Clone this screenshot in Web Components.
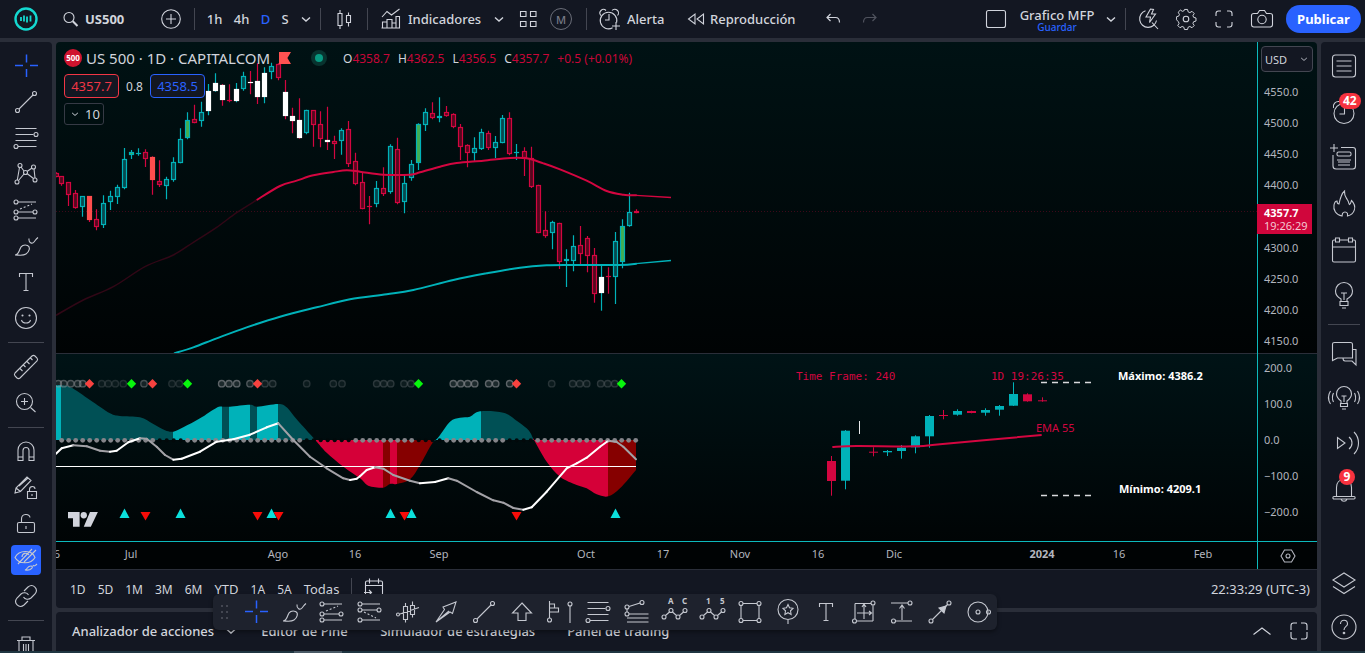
<!DOCTYPE html>
<html lang="es">
<head>
<meta charset="utf-8">
<title>US500 - Grafico MFP</title>
<style>
html, body { margin: 0; height: 100%; background: #2a2e39; }
body { font-family: "Noto Sans", "Open Sans", sans-serif; font-size: 13px; color: #d1d4dc; overflow: hidden; }
</style>
</head>
<body>
<trading-app></trading-app>
<script>
const RESET = `
*{box-sizing:border-box}
:host([hidden]){display:none}
button,select{font:inherit;color:inherit;background:none;border:0;padding:0;margin:0;cursor:pointer}
a{color:inherit;text-decoration:none}
`;
function define(name, css, html, setup) {
  const t = document.createElement('template');
  t.innerHTML = `<style>${RESET}${css}</style>${html}`;
  customElements.define(name, class extends HTMLElement {
    constructor() {
      super();
      this.attachShadow({ mode: 'open' }).append(t.content.cloneNode(true));
    }
    connectedCallback() { if (setup && !this.ready) { this.ready = true; setup(this.shadowRoot, this); } }
  });
}

/* ---------- icons, all on a 28 x 28 grid ---------- */
const c = (x, y, r = 2) => `<circle cx="${x}" cy="${y}" r="${r}"/>`;
const p = (d, extra = '') => `<path d="${d}" ${extra}/>`;
const BULB = p('M11 19v-2c-2-1.500-4.500-3.500-4.500-7a7.500 7.500 0 0 1 15 0c0 3.500-2.500 5.500-4.500 7v2M10.500 19.500h7v3h-7zM12 25h4M14 18v-6M11.500 12h5');
const ICONS = {
  logo: `<circle cx="14" cy="14" r="10.500" stroke="#14d8d0" stroke-width="2.400"/><path d="M9 12v4M12 10.500v6M15 11.500v6M18.500 10.500v6" stroke="#14d8d0" stroke-width="1.800"/>`,
  search: c(13, 12.5, 5) + p('M16.800 16.300l4.700 4.700', 'stroke-width="2"'),
  plus: c(14, 14, 9.3) + p('M14 9v10M9 14h10'),
  chevron: p('M10 12.500l4 3.500 4-3.500', 'stroke-width="1.400"'),
  chevronup: p('M5.500 17.500l8.500-6.500 8.500 6.500'),
  candles: p('M8 8.500h4v12H8zM10 5v3.500M10 20.500V24M16.500 10.500h4v7h-4zM18.500 7.500v3M18.500 17.500v4'),
  indicators: p('M5.500 23v-6h4.500v6M10 23V14.500h5V23M15 18h4v5M19 23V11.500h3.500V23zM4.500 23h18.500M5 12l5-5.500 4.500 3.500L22.500 4'),
  grid: p('M6.500 6.500h5.500v5h-5.500zM16.500 6.500h5.500v5h-5.500zM6.500 16.500h5.500v5h-5.500zM16.500 16.500h5.500v5h-5.500z'),
  alert: p('M20.600 17.500a8.300 8.300 0 1 0-4 5.300M13 9v6h-4M5 10.500a3.500 3.500 0 0 1 5-5M16 5.500a3.500 3.500 0 0 1 5.500 5M20 17v8M16 21h8'),
  rewind: p('M13 9v10l-6.500-5zM21.500 9v10L15 14z'),
  undo: p('M11.500 9L8 12.500l3.500 3.500M8.500 12.500h8c3 0 4 2 4 5', 'stroke-width="1.200"'),
  redo: p('M16.500 9l3.500 3.500-3.500 3.500M19.500 12.500h-8c-3 0-4 2-4 5', 'stroke-width="1.200"'),
  layout: `<rect x="4.500" y="5.500" width="19" height="17" rx="2"/>`,
  quick: p('M11.500 5.800a8.500 8.500 0 1 0 11 9.700M18 17.500l6 6.500M16.500 4l-4.500 8h4.500l-1 5.500 6-8.500h-4l2-4.500z'),
  gear: p('M12.300 4.500h3.400l.7 2.700 1.900.8 2.400-1.400 2.400 2.400-1.400 2.400.8 1.900 2.600.7v3.400l-2.600.7-.8 1.900 1.400 2.400-2.400 2.400-2.400-1.400-1.900.8-.7 2.600h-3.400l-.7-2.600-1.900-.8-2.400 1.400-2.400-2.400 1.400-2.400-.8-1.900L3.500 16v-3.400l2.400-.7.8-1.900-1.400-2.400 2.400-2.400 2.400 1.400 1.900-.8z', 'transform="translate(1.400 .4) scale(.9)"') + c(14, 14, 2.8),
  full: p('M6 11V8.500c0-1.500 1-2.500 2.500-2.500H11M17 6h2.500C21 6 22 7 22 8.500V11M22 17v2.500c0 1.500-1 2.500-2.500 2.500H17M11 22H8.500C7 22 6 21 6 19.500V17'),
  maximize: p('M6 13V8.500c0-1.500 1-2.500 2.500-2.500H12M16 6h3.500C21 6 22 7 22 8.500V13M22 15v4.500c0 1.500-1 2.500-2.500 2.500H16M12 22H8.500C7 22 6 21 6 19.500V15'),
  camera: p('M6 8.500h3.500l2-3h5l2 3H22c1.500 0 2.500 1 2.500 2v9c0 1.500-1 2.500-2.500 2.500H6c-1.500 0-2.500-1-2.500-2.500v-9c0-1 1-2 2.500-2z') + c(14, 14.5, 4.2),
  cross: p('M14.500 2.500v8M14.500 17v8M3 13.500h8M18 13.500h8', 'stroke="#2962ff" stroke-width="1.500"'),
  trend: c(5.5, 22.5) + c(22.5, 5.500) + p('M7 21L21 7'),
  fib: p('M3.500 4.500h21M3.500 10.500h18M3.500 16.500h21M6 22.500h18.500') + c(24, 10.5) + c(4, 22.5),
  pattern: c(5, 22) + c(8, 5.5) + c(13.5, 12.5) + c(21.5, 7) + c(23, 20) + p('M5.300 20L7.500 7.500M9 7l3 4M6.500 20.500l5.500-6.500M15 11.500l5-3.500M22 9l1 9M15 13.500l6.500 5'),
  project: c(4, 6) + c(4, 22) + c(23, 16) + c(4, 16) + p('M6 6h18M6 16h15M6 22h18') + p('M8 13l12-5', 'stroke-dasharray="2 2"'),
  project2: c(4, 6) + c(4, 12) + c(23, 12) + c(4, 22) + p('M6 6h18M6 12h15M6 22h18') + p('M8 14l12 6', 'stroke-dasharray="2 2"'),
  brush: p('M3 23c3 0 4-3 5-6s4-5 7.500-3.500S17 20 14 22s-7 1-11 1zM17 6.500c-.5 4 3 6 5 3.500S24 7 26 5.500'),
  text: p('M7.500 9V5.500h13V9M14 5.500v17M11.500 22.500h5'),
  smile: c(14, 14, 10.5) + p('M9.500 16c1 4 8 4 9 0') + c(10.5, 11.5, .5) + c(17.5, 11.500, .5),
  ruler: p('M3 20L20 3c1-.8 2-.8 3 0l2 2c.8 1 .8 2 0 3L8 25c-1 .8-2 .8-3 0l-2-2c-.8-1-.8-2 0-3zM8 15.500l2.500 2.500M11.500 12l2 2M15 8.500l2.500 2.500M18.500 5l2 2'),
  zoomin: c(12.5, 12.5, 8) + p('M18.500 18.500l5 4.500M12.500 9v7M9 12.500h7'),
  magnet: p('M6 22.500V12a8 8 0 0 1 16 0v10.500h-5V12.500a3 3 0 0 0-6 0v10zM6 19h5M17 19h5'),
  penlock: p('M3 19l1-5L15 3l4 3.500L8.500 17.500zM4 14l4.500 3.500M7 12l9-8M15.500 17.500h9v7h-9zM17.500 17.500v-2c0-4 5.500-4 5.500-.5M20 20v2'),
  lock: p('M7 12.500h14c1 0 1.500.5 1.500 1.500v7c0 1-.5 1.500-1.500 1.500H7c-1 0-1.500-.5-1.500-1.500v-7c0-1 .5-1.500 1.500-1.500zM9.500 12.500V9c0-6 8-5.500 8.500-1.500M14 16v3'),
  hide: p('M3 11.500c4-8 17-8 20 0-4 7-16 7-20 0zM20 3L6 18M24 4L12 16M10 11c0-4 5-5 7-2') + p('M13 24c3-1 2-4 6-4 3 0 1 5-6 4zM21 19c1 2 3 0 4-1'),
  link: p('M12 9l4-4c5-4 11 2 7 7l-4 4c-2.500 2-6 1.500-7.500-1M16 19l-4 4c-5 4-11-2-7-7l4-4c2.500-2 6-1.500 7.500 1'),
  trash: p('M5 9.500h18M7 9.500V23c0 1 .5 1.500 1.500 1.500h11c1 0 1.500-.5 1.500-1.500V9.500M10 9V6h8v3M11.500 13v8M14 13v8M16.500 13v8'),
  list: `<rect x="2.500" y="3" width="23" height="22" rx="3"/>` + p('M6.500 9h15M6.500 14h15M6.500 19h15'),
  clock: c(14, 15.5, 10) + p('M14.500 10v6h-5M3.500 10c-1-4 2-7 6-6.500M18.500 3.500c4-.5 7 3 6 6.500'),
  note: p('M11 3.500h12c1.500 0 2.500 1 2.500 2.500v16c0 2-1 3-2.500 3H6c-2 0-3-1-3-3V11M4 0v8M0 4h8M8 18h12M8 21h12') + `<rect x="7" y="8" width="14" height="4" rx="1.500"/>` + p('M7 16h14'),
  fire: p('M12 26C6 25 3 20 4 15c.5-2.500 2-4 3-4 0 2 .5 3 2 3C10 9 11 4 14.500 1c-.5 5 2 7 3 9 1.500 2 1 4 2 4.500 1.500-1 1.500-3 2-4 6 6 3 14-4 15.500v-2.500c-1-2-4-2-5 0z'),
  calendar: p('M9.500 4h9M23 4h1c1 0 1.500.5 1.500 1.500v19c0 1-.5 1.500-1.500 1.500H4c-1 0-1.500-.5-1.500-1.500v-19C2.500 4.500 3 4 4 4h1M2.500 11h23M5.500 2h4v4h-4zM18.500 2h4v4h-4z'),
  bulb: p('M11 19v-2c-3-1.500-5.500-4-5.500-8a8.500 8.500 0 0 1 17 0c0 4-2.500 6.500-5.500 8v2M10 19.500h8v4h-8zM12 26h4M14 18v-7M11 11h6'),
  chat: p('M2.500 21.500V5c0-1 1-1.500 2-1.500h16c1.500 0 2 .5 2 2V19H7.500zM22.500 10.500H26V26l-4-4h-7c-1 0-2-1-2-3'),
  stream: BULB + p('M3.500 9c-1.500 3-1.500 6 0 9M.5 7c-2.500 4-2.500 9 0 13M24.500 9c1.500 3 1.500 6 0 9M27.500 7c2.500 4 2.500 9 0 13'),
  cast: p('M7.500 8.500v11l7.500-5.500zM19 8c4 3 4 9 0 12M24 3c6 6 6 16 0 22'),
  bell: p('M6.500 22v-8.500c0-5 3-8 7.500-8s7.500 3 7.500 8V22M11 25c1 3 5 3 6 0M4 22.500h20c1.500 0 1.500 2.500 0 2.500H4c-1.500 0-1.500-2.500 0-2.500z'),
  layers: p('M3 11L14 4l11 7-11 7zM3 17.500L14 24.500l11-7'),
  help: c(14, 14, 12) + p('M10.500 11c0-5 7-5 7 0 0 2.500-3.500 2.500-3.500 6') + c(14, 20, .8),
  axisgear: p('M10.500 8h7l3.500 6-3.500 6h-7L7 14z') + c(14, 14, 2),
  calrange: p('M11 8h7M5.500 21.500V9.500C5.500 8.500 6 8 7 8h14c1 0 1.500.5 1.500 1.500V21M5.500 12.500h17M9.500 5.500v5M18.500 5.500v5M9 17l2.500 2.500L9 22M11.500 19.500H4'),
  drag: `<g fill="#434651" stroke="none"><rect x="10" y="7" width="2" height="2"/><rect x="15" y="7" width="2" height="2"/><rect x="10" y="13" width="2" height="2"/><rect x="15" y="13" width="2" height="2"/><rect x="10" y="19" width="2" height="2"/><rect x="15" y="19" width="2" height="2"/></g>`,
  ghost: p('M9.500 8.500h4v13h-4zM11.500 5v3.500M11.500 21.500v3M16.500 7.500h4v9h-4zM18.500 3.500v4M18.500 16.500v3M6 16l19-6.500') + c(4, 16.5, 1.5),
  arrow: p('M4 24L12.500 11.500 11 9 24 4l-3.500 11.500-2.500-1.500zM4 24l13-11'),
  arrowup: p('M14 5l9.500 10H18v7.500h-8V15H4.500z'),
  volume: c(3.500, 22) + p('M3.500 3v17M3.500 6h5v4h-5M3.500 10h9v4h-9M24 8v17') + c(24, 6),
  fan: c(5, 9) + c(5, 16) + c(20, 4.5) + p('M7 8.500L18 5M5 11v3M7 16h19.500M5 20h21.500M5 24h21.500'),
  zig: c(4, 19) + c(11, 12.500) + c(18, 19) + c(25, 12.500) + p('M5.500 17.500l4-3.500M12.500 14l4 3.500M19.500 17.500l4-3.500'),
  rect: c(5, 5.5) + c(23, 5.500) + c(5, 22.5) + c(23, 22.5) + p('M7 5.500h14M7 22.500h14M5 7.500v13M23 7.500v13'),
  pin: c(14, 11.500, 10) + p('M14 22v4M14 6.500l1.500 3.300 3.500.5-2.500 2.500.6 3.600-3.100-1.700-3.100 1.700.6-3.600L9 10.300l3.500-.5z'),
  range: p('M5 5.500h16M23 7.500v15.500M5 5.500V21M7 23h16M14 7v14M7 15h14M12 9l2-3 2 3M19 13l2.500 2-2.500 2') + c(23, 5) + c(4.5, 23),
  pricerange: p('M3 5h17M7 23h17M14 22V8M11.500 10.500L14 7l2.500 3.500') + c(22, 5) + c(5.5, 23),
  arrowline: c(5, 23) + c(23, 5) + p('M6.500 21.500L21.500 6.500') + p('M20 8l-7 2 5 5z', 'fill="currentColor"'),
  circle: c(14, 14, 10) + c(14, 14, 2) + c(24.5, 14)
};
customElements.define('ui-icon', class extends HTMLElement {
  constructor() { super(); this.attachShadow({ mode: 'open' }); }
  connectedCallback() {
    this.shadowRoot.innerHTML = `<style>:host{display:inline-flex;width:28px;height:28px;flex:none}svg{width:100%;height:100%;overflow:visible}</style>
    <svg viewBox="0 0 28 28" fill="none" stroke="currentColor" stroke-width="1.100" aria-hidden="true">${ICONS[this.getAttribute('name')] || ''}</svg>`;
  }
});

/* a square toolbar button with an icon and an optional badge */
customElements.define('tool-button', class extends HTMLElement {
  constructor() { super(); this.attachShadow({ mode: 'open' }); }
  connectedCallback() {
    const icon = this.getAttribute('icon'), label = this.getAttribute('label') || icon;
    this.shadowRoot.innerHTML = `<style>${RESET}
      :host{display:flex;flex:none;width:var(--w,38px);height:var(--h,36px)}
      button{position:relative;width:100%;height:100%;display:flex;align-items:center;justify-content:center}
      :host([active]) button{height:30px;width:30px;margin:auto;background:#2962ff;border-radius:4px}
      :host([dim]){color:#50535e}
      b{position:absolute;top:4px;left:50%;font-size:12px;line-height:16px;color:#fff;background:#f7323f;border-radius:8px;padding:0 4px;min-width:16px;margin-left:-5px}
      </style><button aria-label="${label}"><ui-icon name="${icon}"></ui-icon>${this.hasAttribute('badge') ? `<b>${this.getAttribute('badge')}</b>` : ''}</button>`;
  }
});
const tb = (icon, w, extra = '') => `<tool-button icon="${icon}" style="--w:${w}px" ${extra}></tool-button>`;

define('top-bar', `
:host{display:flex;align-items:center;height:38px;background:#131722;padding-right:4px;font-weight:500;color:#d1d4dc}
i{flex:none;width:1px;height:22px;background:#434651}
.t{height:36px;flex:none;white-space:nowrap;text-align:left}
.sym{font-weight:700;display:flex;align-items:center;width:98px;gap:1px}
.m{width:22px;height:22px;border:1px solid #6a6d78;border-radius:50%;color:#787b86;font-size:11px;margin:0 14px 0 6px}
.iv{width:27px;text-align:center}
.on{color:#2962ff}
.name{margin-left:auto;display:flex;align-items:center}
.save{display:flex;flex-direction:column;align-items:center;justify-content:center;width:80px;height:36px;line-height:18px}
.save small{font-size:10px;line-height:14px;height:12px;color:#2962ff;margin-top:-4px}
.pub{background:#2962ff;color:#fff;font-weight:700;height:28px;width:75px;border-radius:14px;margin-left:5px}
.g{flex:none;width:6px}
`, `
${tb('logo', 52)}<span class="g" style="width:4px"></span>
<button class="t sym"><ui-icon name="search"></ui-icon>US500</button>
${tb('plus', 34)}<span class="g"></span><i></i><span class="g"></span>
<button class="t iv">1h</button><button class="t iv">4h</button><button class="t iv on" style="width:21px">D</button><button class="t iv" style="width:18px">S</button>
${tb('chevron', 24)}<span class="g" style="width:2px"></span><i></i>
${tb('candles', 46)}<i></i><span class="g"></span>
${tb('indicators', 34)}<button class="t" style="width:78px">Indicadores</button>${tb('chevron', 26)}
${tb('grid', 32)}<button class="m" aria-label="Modelo">M</button><i></i><span class="g"></span>
${tb('alert', 34)}<button class="t" style="width:54px">Alerta</button>
${tb('rewind', 29)}<button class="t" style="width:104px">Reproducción</button>
${tb('undo', 37)}${tb('redo', 37, 'dim')}
<div class="name">${tb('layout', 42)}<button class="save"><span>Grafico MFP</span><small>Guardar</small></button>${tb('chevron', 28)}</div><i></i>
<span class="g" style="width:3px"></span>
${tb('quick', 38)}${tb('gear', 38)}${tb('full', 38)}${tb('camera', 38)}
<button class="pub">Publicar</button>
`);

define('side-tools', `
:host{display:flex;flex-direction:column;align-items:center;background:#131722;padding-top:6px;overflow:hidden;border-radius:0 4px 0 0;min-height:0;--w:52px;color:#c5c8d0}
hr{flex:none;width:36px;height:1px;border:0;margin:6px 0;background:#434651}
`, ['cross', 'trend', 'fib', 'pattern', 'project', 'brush', 'text', 'smile', '-', 'ruler', 'zoomin', '-', 'magnet', 'penlock', 'lock', 'hide', 'link', '-', 'trash']
  .map(n => n === '-' ? '<hr>' : `<tool-button icon="${n}" ${n === 'hide' ? 'active' : ''}></tool-button>`).join(''));

define('right-rail', `
:host{display:flex;flex-direction:column;align-items:center;background:#131722;padding:1px 0 2px 2px;overflow:hidden;border-radius:4px 0 0 0;min-height:0;--w:42px;--h:46px;color:#c5c8d0}
hr{flex:none;width:32px;height:1px;border:0;margin:5px 0;background:#434651}
.low{--h:45px}
.foot{margin-top:auto;--h:44px}
`, `
<tool-button icon="list"></tool-button><tool-button icon="clock" badge="42"></tool-button><tool-button icon="note"></tool-button>
<tool-button icon="fire"></tool-button><tool-button icon="calendar"></tool-button><tool-button icon="bulb"></tool-button><hr>
<div class="low"><tool-button icon="chat"></tool-button><tool-button icon="stream"></tool-button><tool-button icon="cast"></tool-button><tool-button icon="bell" badge="9"></tool-button></div>
<div class="foot"><tool-button icon="layers"></tool-button><tool-button icon="help"></tool-button></div>`);

/* ---------- legend over the price pane ---------- */
define('chart-legend', `
:host{display:flex;flex-direction:column;align-items:flex-start}
.row{display:flex;align-items:center}
.a{height:22px}
.logo{width:18px;height:18px;border-radius:50%;background:#cf142f;color:#fff;font-weight:700;font-size:8px;line-height:18px;text-align:center;margin-right:4px}
h1{margin:0;font-size:15px;font-weight:400;width:193px;white-space:nowrap;color:#d1d4dc}
.flag{width:12px;height:12px;background:#ff5252;clip-path:polygon(0 0,100% 0,70% 50%,100% 100%,0 100%)}
.dot{width:8px;height:8px;border-radius:50%;background:#089981;box-shadow:0 0 0 4px #08332f;margin:0 20px 0 24px}
.o{gap:8px;font-size:12px;color:#c80638}
.o b{font-weight:400;color:#d1d4dc}
.b{margin-top:5px;height:24px}
.px{width:55px;height:24px;border:1px solid #f23645;border-radius:4px;color:#f23645;background:#131722}
.ask{border-color:#2962ff;color:#2962ff}
.sp{width:31px;text-align:center;font-size:12px}
.n{margin-top:5px;height:22px;width:40px;border:1px solid #363a45;border-radius:3px;display:flex;align-items:center}
.n ui-icon{width:20px;height:28px}
`, `
<div class="row a"><span class="logo">500</span><h1>US 500 · 1D · CAPITALCOM</h1><span class="flag"></span><span class="dot"></span>
<div class="row o"><span><b>O</b>4358.7</span><span><b>H</b>4362.5</span><span><b>L</b>4356.5</span><span><b>C</b>4357.7</span><span>+0.5 (+0.01%)</span></div></div>
<div class="row b"><button class="px">4357.7</button><span class="sp">0.8</span><button class="px ask">4358.5</button></div>
<button class="n"><ui-icon name="chevron"></ui-icon>10</button>`);

/* ---------- chart data: [x, high, body top, body bottom, low, kind], 3 units per pixel ---------- */
const BARS_A = [[18,397,400,412,412,'r'],[35,409,409,431,437,'r'],[56,427,427,464,498,'r'],[77,450,460,503,506,'r'],[98,468,469,500,530,'t'],[119,469,469,540,546,'R'],[140,508,536,562,571,'r'],[161,466,488,556,564,'t'],[182,452,469,486,510,'t'],[203,434,442,470,492,'t'],[224,324,358,445,448,'t'],[245,330,337,346,357,'g'],[266,325,339,342,347,'t'],[287,328,337,357,381,'r'],[308,349,352,421,464,'R'],[329,361,422,434,441,'r'],[350,410,417,437,478,'t'],[371,352,367,419,425,'t'],[392,265,298,368,370,'t'],[413,217,241,295,298,'g'],[434,194,237,248,250,'r'],[455,185,217,244,260,'t'],[476,132,154,214,226,'wt'],[497,100,130,152,155,'wt'],[518,132,135,181,197,'wr'],[539,133,181,184,187,'r'],[560,129,146,182,187,'wt'],[581,95,108,146,152,'t'],[602,93,125,128,163,'wr'],[623,70,122,172,192,'wr'],[644,82,100,172,190,'wt'],[665,68,79,95,118,'t'],[686,70,72,115,121,'r'],[707,120,155,228,238,'wr'],[728,203,227,244,280,'wr'],[749,175,241,293,296,'wr'],[770,209,211,280,283,'t'],[791,211,211,254,320,'r'],[812,214,253,298,322,'r'],[833,200,300,306,330,'wr'],[854,287,303,313,357,'r'],[875,265,271,304,344,'t'],[896,243,267,371,381,'r'],[917,338,363,433,436,'r'],[938,395,427,506,508,'r'],[959,468,499,502,553,'r'],[980,423,444,492,502,'t']];
const BARS_B = [[71,262,325,342,348,'r'],[92,193,198,337,341,'t'],[113,173,208,368,373,'r'],[134,283,310,365,400,'t'],[155,240,252,293,302,'t'],[176,130,132,250,270,'g'],[197,85,97,134,153,'t'],[218,67,99,114,118,'r'],[239,52,108,113,127,'t'],[260,78,97,107,110,'r'],[281,100,102,142,145,'r'],[302,132,141,201,240,'r'],[323,193,195,220,262,'r'],[344,172,204,218,242,'t'],[365,146,157,207,210,'t'],[386,152,160,203,210,'r'],[407,168,186,203,234,'t'],[428,105,115,188,190,'t'],[449,97,114,223,226,'r'],[470,192,216,219,240,'t'],[494,202,213,234,288,'r'],[515,200,235,322,324,'r'],[536,314,316,458,460,'r'],[557,394,450,467,473,'r'],[578,422,427,458,508,'t'],[599,428,430,545,567,'r'],[620,508,538,543,621,'t'],[641,466,498,542,574,'t'],[662,438,495,521,552,'r'],[683,468,475,527,577,'r'],[704,504,526,641,668,'r'],[725,555,590,640,692,'wt'],[746,562,587,590,641,'r'],[767,456,484,590,672,'t'],[788,418,438,545,565,'g'],[809,338,397,437,440,'t'],[829,388,394,400,400,'r']];
const TEAL = '#00b2b9', RED = '#d30640';
const shift = (pts, ox, oy) => pts.map(([x, y]) => [ox + x / 3, oy + y / 3]);
const line = pts => 'M' + pts.map(q => q.map(v => +v.toFixed(1)).join(' ')).join('L');
function smooth(pts) {
  let d = `M${pts[0].join(' ')}`;
  for (let i = 0; i < pts.length - 1; i++) {
    const a = pts[i - 1] || pts[i], b = pts[i], e = pts[i + 1], f = pts[i + 2] || e;
    d += `C${[b[0] + (e[0] - a[0]) / 6, b[1] + (e[1] - a[1]) / 6, e[0] - (f[0] - b[0]) / 6, e[1] - (f[1] - b[1]) / 6, e[0], e[1]].map(v => v.toFixed(2)).join(' ')}`;
  }
  return d;
}
function candle([x, hi, t, b, lo, k], ox, oy) {
  const cx = Math.floor(ox + x / 3) + .5, Y = v => oy + v / 3;
  const wick = (k === 'r' || k === 'R' || k === 'wr') ? RED : TEAL;
  const fill = { r: '#55081e', t: '#06494f', g: '#43ad50', R: '#ff4e4e', wt: '#fff', wr: '#fff' }[k];
  const edge = k[0] === 'w' ? '#fff' : k === 'R' ? '#ff4e4e' : wick;
  const top = Math.round(Y(t)) + .5, h = Math.max(0.01, Math.round(Y(b)) - Math.round(Y(t)) - 1);
  return `<path d="M${cx} ${Y(hi).toFixed(1)}V${Y(lo).toFixed(1)}" stroke="${wick}" stroke-width="1.200"/>` +
    `<rect x="${cx - 2}" y="${top}" width="4" height="${h}" fill="${fill}" stroke="${edge}" stroke-width="1.200"/>`;
}
const FADED = [[18,826],[100,780],[190,740],[285,680],[370,645],[430,607],[500,562],[560,518],[620,480]];
const EMA = [...shift([[620,480],[690,438],[740,422],[790,406],[850,396],[890,391],[930,395]], 50, 40), ...shift([[70,284],[150,284],[180,277],[240,260],[290,249],[370,242],[450,234],[500,235],[550,250],[600,268],[680,302],[740,333],[790,344],[830,346]], 360, 80)];
const SLOW = [...shift([[372,940],[430,922],[500,895],[590,862],[690,830],[800,802],[900,778]], 50, 40), ...shift([[80,643],[160,630],[280,600],[380,580],[480,563],[560,556],[640,555],[780,555],[830,551]], 360, 80)];

define('price-pane', `
:host{display:block;position:relative;min-height:0;overflow:hidden;background:linear-gradient(#001214,#000304)}
svg{display:block;width:100%;height:100%}
chart-legend{position:absolute;left:8px;top:5px}
`, `<svg viewBox="56 42 1201 311" preserveAspectRatio="xMinYMin slice" fill="none" role="img" aria-label="US 500"></svg><chart-legend></chart-legend>`,
root => {
  root.querySelector('svg').innerHTML =
    `<path d="M56 211.500H1257" stroke="#6e0a26" stroke-dasharray="1 2" opacity=".55"/>` +
    BARS_A.map(b => candle(b, 50, 40)).join('') + BARS_B.map(b => candle(b, 360, 80)).join('') +
    `<path d="${smooth(shift(FADED, 50, 40))}" stroke="#300716" stroke-width="1.500"/>
     <path d="${smooth(EMA)}" stroke="${RED}" stroke-width="2"/><path d="M636 195.400L671 197.500" stroke="${RED}" stroke-width="1.300"/>
     <path d="${smooth(SLOW)}" stroke="${TEAL}" stroke-width="2"/><path d="M636 263.700L671 260.500" stroke="${TEAL}" stroke-width="1.300"/>`;
});

const WAVE = [...shift([[18,106],[60,111],[120,150],[180,190],[210,198],[270,202],[310,222],[345,241],[370,245],[400,232],[450,205],[500,173],[520,170],[540,170],[600,164],[622,170],[685,162],[710,172],[740,208],[795,269],[830,308],[880,350],[930,385]], 50, 350),
  ...shift([[20,404],[40,411],[70,413],[90,402],[110,402],[150,388],[180,345],[215,283],[235,262],[270,215],[300,203],[330,200],[360,184],[430,188],[470,212],[500,235],[512,250],[522,270],[560,335],[600,380],[650,405],[680,415],[710,433],[745,439],[780,415],[828,360]], 360, 350)];
const BANDS = [[56,61,0],[61,173,1],[173,222,0],[222,229,1],[229,250,0],[250,257,1],[257,278,0],[278,315,1],[315,383,2],[383,390,3],[390,397,2],[397,433,3],[433,481,0],[481,533,1],[533,608,2],[608,636,3]];
const BAND_FILL = [TEAL, '#005055', '#d50038', '#860000'];
const MOM = [...shift([[18,311],[35,295],[70,286],[110,289],[150,302],[180,305],[200,302],[235,277],[270,265],[290,266],[320,290],[345,315],[370,329],[395,326],[450,305],[500,275],[550,268],[600,254],[650,232],[685,220],[730,270],[780,320],[830,355],[880,385],[900,390],[920,386]], 50, 350),
  ...shift([[0,379],[20,360],[45,352],[70,356],[100,375],[150,392],[180,400],[225,396],[265,385],[290,392],[350,426],[400,451],[430,458],[460,474],[490,479],[515,472],[560,425],[620,355],[650,340],[680,323],[720,290],[745,272],[770,276],[790,290],[828,328]], 360, 350)];
const MINI = [[155,318,333,393,437,1],[197,240,242,392,418,0],[281,292,305,307,319,1],[323,300,303,307,318,0],[365,285,293,303,326,0],[407,256,259,292,310,0],[449,195,198,259,293,0],[491,180,195,197,208,1],[533,178,183,194,197,0],[575,182,183,189,190,1],[617,175,180,188,197,0],[659,165,168,179,197,0],[701,97,132,167,168,0],[743,130,133,154,155,1],[787,142,151,153,155,1]];
const RINGS = [[50,.5,25,41,62,83,98],[50,.22,155,175,196,220],[50,.45,282],[50,.22,366,388],[50,.6,515,537,560],[50,.5,600],[50,.3,645,668],[50,.25,770],[50,.25,850,876],[360,.28,50,71,92],[360,.28,132,153],[360,.6,280,302,323,344,386,407,449],[360,.25,575],[360,.28,638,659,680],[360,.28,722,743,764]];

define('indicator-pane', `
:host{display:block;min-height:0;overflow:hidden;border-top:1px solid #2a2e39;background:linear-gradient(#001316,#000405)}
svg{display:block;width:100%;height:100%}
.mono{font:11px "DejaVu Sans Mono",monospace;fill:#d30640}
.b{font-weight:700;font-size:11px;fill:#fff}
.e{font-size:11px;fill:#d30640}
`, `<svg viewBox="56 354 1201 187" preserveAspectRatio="xMinYMin slice" fill="none"></svg>`,
root => {
  let s = `<defs><clipPath id="w"><path d="${smooth(WAVE)}L636 440L56 440Z"/></clipPath></defs><g clip-path="url(#w)" shape-rendering="crispEdges">` +
    BANDS.map(([a, b, k]) => `<rect x="${a}" y="370" width="${b - a}" height="140" fill="${BAND_FILL[k]}"/>`).join('') + '</g>';
  for (let i = 0; i <= 82; i++) {
    const x = 61.7 + i * 7;
    const dark = (x > 157 && x < 183) || (x > 304 && x < 351) || (x > 416 && x < 444) || (x > 507 && x < 535);
    s += `<circle cx="${x.toFixed(1)}" cy="440.300" r="${dark ? 2 : 2.400}" fill="${dark ? '#02090b' : '#848489'}"/>`;
  }
  s += `<path d="M56 466.500H636" stroke="#fff"/>`;
  for (let i = 1; i < MOM.length; i++) {
    const up = MOM[i][1] <= MOM[i - 1][1];
    s += `<path d="${line([MOM[i - 1], MOM[i]])}" stroke="${up ? '#fff' : '#a3a2a7'}" stroke-width="2" stroke-linecap="round"/>`;
  }
  for (const [o, a, ...xs] of RINGS) for (const x of xs) s += `<circle cx="${(o + x / 3).toFixed(1)}" cy="383.700" r="3.200" stroke="#9a9a9f" stroke-width="1.400" fill="#9a9a9f" fill-opacity=".3" opacity="${a}"/>`;
  for (const [x, col] of [[89.5,'#f7423f'],[131.5,'#08f50d'],[152.5,'#f7423f'],[187.5,'#08f50d'],[257.5,'#f7423f'],[418.5,'#08f50d'],[516.5,'#f7423f'],[621.5,'#08f50d']]) s += `<path d="M${x} 379l4.700 4.700-4.700 4.700-4.700-4.700z" fill="${col}"/>`;
  for (const x of [145.5, 257.5, 278.5, 404.5, 516.5]) s += `<path d="M${x - 5} 512h10l-5 8.500z" fill="#f80c08"/>`;
  for (const x of [124.5, 180.5, 271.5, 390.5, 411.5, 615.5]) s += `<path d="M${x - 5} 518h10l-5-9.500z" fill="#0be0dc"/>`;
  s += `<g transform="translate(68 509) scale(.83)" fill="#d1d4dc"><path d="M14 21.500H6V11H0V3.500h14zM27.500 21.500h-8.500l7.500-18H36z"/><circle cx="19" cy="7.500" r="3.800"/></g>`;
  s += MINI.map(([x, hi, t, b, lo, r]) => {
    const cx = Math.floor(780 + x / 3) + .5, Y = v => (350 + v / 3).toFixed(1), col = r ? RED : TEAL;
    return `<path d="M${cx} ${Y(hi)}V${Y(lo)}" stroke="${col}"/><rect x="${cx - 4.500}" y="${Y(t)}" width="9" height="${Math.max(1, (b - t) / 3).toFixed(1)}" fill="${col}"/>`;
  }).join('');
  s += `<path d="M859.500 421v13" stroke="#e8e8ea"/><path d="${smooth(shift([[157,291],[230,288],[400,289],[480,283],[785,255]], 780, 350))}" stroke="${RED}" stroke-width="2"/>
  <path d="M1041 382.500h51M1041 495.500h51" stroke="#d8d9dc" stroke-width="1.500" stroke-dasharray="6 5"/>
  <text class="mono" x="796" y="380">Time Frame: 240</text><text class="mono" x="991" y="380">1D 19:26:35</text>
  <text class="e" x="1036" y="432">EMA 55</text><text class="b" x="1118" y="380">Máximo: 4386.2</text><text class="b" x="1119" y="493">Mínimo: 4209.1</text>`;
  root.querySelector('svg').innerHTML = s;
});

define('price-axis', `
:host{display:flex;flex-direction:column;position:relative;min-height:0;border-left:1px solid #0cb9bc;background:linear-gradient(#001214,#000304);font-size:11px;color:#b2b5be;padding:4px 4px 4px 3px}
.cur{position:relative;display:flex;align-items:center}
select{appearance:none;width:52px;height:26px;border:1px solid #434651;border-radius:4px;background:#131722;padding-left:3px;font-size:11px;color:#d1d4dc}
.cur ui-icon{position:absolute;right:-1px;width:20px;height:20px;pointer-events:none}
ol{list-style:none;margin:12px 0 0;padding:0 0 0 3px;flex:1;display:flex;flex-direction:column;justify-content:space-between}
li{height:16px;line-height:16px;position:relative}
.tag{position:absolute;left:-7px;top:-5px;width:55px;height:30px;background:#d0063c;color:#f3c9d3;line-height:13px;padding:2px 0 0 7px}
.tag b{display:block;color:#fff}
`, `<label class="cur"><select aria-label="Moneda"><option>USD</option></select><ui-icon name="chevron"></ui-icon></label>
<ol><li>4550.0</li><li>4500.0</li><li>4450.0</li><li>4400.0</li><li><span class="tag"><b>4357.7</b>19:26:29</span></li><li>4300.0</li><li>4250.0</li><li>4200.0</li><li>4150.0</li></ol>`);
define('value-axis', `
:host{display:flex;min-height:0;border-left:1px solid #0cb9bc;background:linear-gradient(#001316,#000405);font-size:11px;color:#b2b5be;box-shadow:inset 0 1px #2a2e39}
ol{list-style:none;margin:0;padding:7px 0 21px 6px;flex:1;display:flex;flex-direction:column;justify-content:space-between}
li{height:16px;line-height:16px}
`, `<ol><li>200.0</li><li>100.0</li><li>0.0</li><li>−100.0</li><li>−200.0</li></ol>`);
define('time-axis', `
:host{display:block;border-top:1px solid #0cb9bc;background:#000304;overflow:hidden}
svg{display:block;width:100%;height:27px}
text{font-size:11px;fill:#b2b5be;text-anchor:middle}
`, `<svg viewBox="56 542 1201 27" preserveAspectRatio="xMinYMin slice">${
  [['6',57],['Jul',131],['Ago',278],['16',355],['Sep',439],['Oct',586],['17',663],['Nov',740],['16',818],['Dic',894],['2024',1042,1],['16',1119],['Feb',1203]]
    .map(([t, x, b]) => `<text x="${x}" y="558" ${b ? 'font-weight="700"' : ''}>${t}</text>`).join('')}</svg>`);
define('axis-corner', `:host{display:flex;justify-content:center;align-items:center;border-left:1px solid #0cb9bc;border-top:1px solid #0cb9bc;background:#000304;color:#b2b5be;--h:26px}`,
  `<tool-button icon="axisgear" label="Ajustes de escala"></tool-button>`);
define('chart-area', `
:host{display:grid;min-height:0;grid-template-columns:minmax(0,1fr) 60px;grid-template-rows:minmax(0,311fr) minmax(0,188fr) 28px;border-radius:4px 4px 0 0;overflow:hidden}
`, `<price-pane></price-pane><price-axis></price-axis><indicator-pane></indicator-pane><value-axis></value-axis><time-axis></time-axis><axis-corner></axis-corner>`);

define('range-bar', `
:host{display:flex;align-items:center;height:39px;border-top:1px solid #2a2e39;background:#131722;padding:0 6px 0 14px;gap:11px;font-size:12px;border-radius:0 0 4px 4px}
button{padding-right:1px}
i{width:1px;height:22px;background:#434651}
.wide{font-size:13px}
.clock{margin-left:auto}
tool-button{margin-top:-4px;margin-left:-3px;--w:28px}
`, `<button>1D</button><button>5D</button><button>1M</button><button>3M</button><button>6M</button><button class="wide">YTD</button><button>1A</button><button>5A</button><button class="wide">Todas</button><i></i>
<tool-button icon="calrange" label="Ir a"></tool-button><button class="clock wide">22:33:29 (UTC-3)</button>`);

define('bottom-tabs', `
:host{display:flex;align-items:center;height:39px;background:#131722;padding:0 0 2px 16px;border-radius:4px 4px 0 0;font-weight:500}
button{white-space:nowrap;text-align:left}
.r{margin-left:auto;display:flex;--h:37px}
`, `<button>Analizador de acciones</button><tool-button icon="chevron" style="--w:34px"></tool-button><span style="width:13px"></span>
<button style="width:119px">Editor de Pine</button><button style="width:187px">Simulador de estrategias</button><button>Panel de trading</button>
<span class="r">${tb('chevronup', 36, 'label="Abrir panel"')}${tb('maximize', 37, 'label="Maximizar panel"')}</span>`);

define('favorite-tools', `
:host{display:flex;height:36px;background:#1e222d;border-radius:6px;box-shadow:0 2px 4px rgba(0,0,0,.4);color:#c5c8d0}
.lt{position:relative;display:flex}
.lt span{position:absolute;top:2px;font-size:8px;line-height:10px;font-weight:700;pointer-events:none}
.lt .l1{left:13px}.lt .l2{left:27px}
`, `${tb('drag', 24)}` + ['cross', 'brush', 'project', 'project2', 'ghost', 'arrow', 'trend', 'arrowup', 'volume', 'fib', 'fan', 'zig:A:C', 'zig:1:5', 'rect', 'pin', 'text', 'range', 'pricerange', 'arrowline', 'circle']
  .map(n => { const [i, a, b] = n.split(':'); return a ? `<div class="lt">${tb(i, 38)}<span class="l1">${a}</span><span class="l2">${b}</span></div>` : tb(i, 38); }).join(''));

define('trading-app', `
:host{display:grid;height:100vh;grid-template-columns:52px minmax(0,1fr) 44px;grid-template-rows:38px minmax(0,1fr) 2px;column-gap:4px;background:#2a2e39;position:relative}
top-bar{grid-column:1/-1}
side-tools,right-rail,main{margin-top:4px}
main{display:grid;grid-template-rows:minmax(0,1fr) auto auto;min-height:0}
bottom-tabs{margin-top:4px}
.strip{grid-column:1/-1;background:#1f3541;display:flex;padding-left:294px}
.strip span{width:48px;background:#4a5a66}
favorite-tools{position:absolute;left:213px;bottom:23px}
`, `<top-bar></top-bar><side-tools></side-tools><main><chart-area></chart-area><range-bar></range-bar><bottom-tabs></bottom-tabs></main><right-rail></right-rail><div class="strip"><span></span></div><favorite-tools></favorite-tools>`);
</script>
</body>
</html>
